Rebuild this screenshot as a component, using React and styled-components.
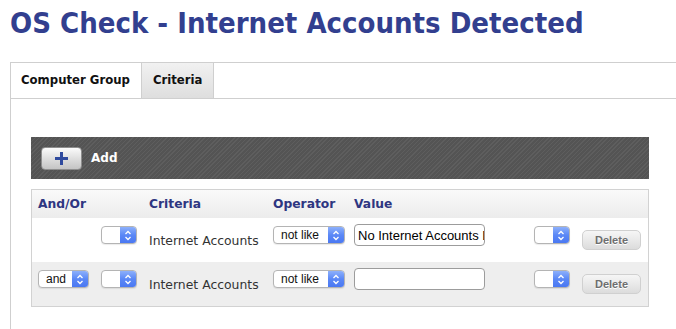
import React from "react";
import styled, { createGlobalStyle } from "styled-components";

const GlobalStyle = createGlobalStyle`
    body {
        margin: 0;
        background: #fff;
        font-family: "DejaVu Sans", sans-serif;
    }
`;

const Page = styled.div`
    width: 676px;
    height: 329px;
    overflow: hidden;
    padding-left: 10px;
    box-sizing: border-box;
`;

const Title = styled.h1`
    margin: 0;
    padding-top: 8px;
    font-family: "DejaVu Sans Condensed", "DejaVu Sans", sans-serif;
    font-stretch: condensed;
    font-size: 29px;
    line-height: 31px;
    font-weight: bold;
    color: #323f8f;
    white-space: nowrap;
`;

const TabPanel = styled.div`
    margin-top: 23px;
    width: 700px;
    height: 300px;
    border-top: 1px solid #cfcfcf;
    border-left: 1px solid #cfcfcf;
`;

const TabBar = styled.div`
    display: flex;
    height: 35px;
    border-bottom: 1px solid #cfcfcf;
`;

const Tab = styled.div`
    padding: 0 11px 0 10px;
    line-height: 35px;
    font-size: 11.7px;
    font-weight: bold;
    color: #111;
    border-right: 1px solid #cfcfcf;
    background: ${(p) => (p.$selected ? "linear-gradient(#f1f1f1, #dedede)" : "#fff")};

    &.second {
        padding-left: 11px;
    }
`;

const Content = styled.div`
    width: 618px;
    padding: 38px 0 0 20px;
`;

const Toolbar = styled.div`
    display: flex;
    align-items: center;
    height: 42px;
    padding-left: 10px;
    background-color: #595959;
    background-image: repeating-linear-gradient(
        135deg,
        #5e5e5e 0px,
        #5e5e5e 1px,
        #545454 1px,
        #545454 3px
    );
`;

const AddButton = styled.div`
    display: flex;
    align-items: center;
    justify-content: center;
    width: 41px;
    height: 23px;
    box-sizing: border-box;
    border: 1px solid #8e8e8e;
    border-radius: 4px;
    background: linear-gradient(#fbfbfb, #d9d9d9 60%, #c4c4c4);
`;

const AddLabel = styled.span`
    margin-left: 9px;
    color: #fff;
    font-size: 12px;
    font-weight: bold;
`;

const Table = styled.div`
    margin-top: 10px;
    border: 1px solid #d2d2d2;
`;

const Row = styled.div`
    display: grid;
    grid-template-columns: 63px 48px 124px 81px 180px 48px 1fr;
    align-items: start;
    height: ${(p) => (p.$header ? "28px" : "44px")};
    padding-left: 6px;
    background: ${(p) =>
        p.$header ? "linear-gradient(#fafafa, #ececec)" : p.$alt ? "#eeeeee" : "#fff"};
`;

const HeaderCell = styled.div`
    line-height: 28px;
    font-size: 12.3px;
    font-weight: bold;
    color: #2e3681;
`;

const CriteriaText = styled.div`
    margin-top: 15px;
    font-size: 12.4px;
    line-height: 16px;
    color: #333;
    white-space: nowrap;
`;

const SelectBox = styled.div`
    margin-top: 8px;
    display: flex;
    width: ${(p) => p.$width}px;
    height: 18px;
    box-sizing: border-box;
    border: 1px solid #b4b4b4;
    border-radius: 4px;
    background: #fff;
    box-shadow: 0 1px 1px rgba(0, 0, 0, 0.08);
    overflow: hidden;
`;

const SelectText = styled.span`
    flex: 1;
    padding-left: 7px;
    font-family: "Liberation Sans", Arial, sans-serif;
    font-size: 12px;
    line-height: 16px;
    color: #111;
`;

const SelectArrow = styled.span`
    display: flex;
    align-items: center;
    justify-content: center;
    width: 16px;
    background: linear-gradient(#8db0fb, #5b88f6 50%, #4a78f2);
`;

const ValueInput = styled.input`
    margin-top: 6px;
    width: 131px;
    height: 22px;
    box-sizing: border-box;
    padding: 0 0 0 3px;
    border: 1px solid #9c9c9c;
    border-radius: 4px;
    font-family: "Liberation Sans", Arial, sans-serif;
    font-size: 13px;
    color: #000;
    background: #fff;
    outline: none;
`;

const DeleteButton = styled.div`
    margin-top: 12px;
    width: 59px;
    height: 20px;
    box-sizing: border-box;
    border: 1px solid #d0d0d0;
    border-radius: 5px;
    background: linear-gradient(#f6f6f6, #dcdcdc);
    font-family: "Liberation Sans", Arial, sans-serif;
    font-size: 11px;
    font-weight: bold;
    line-height: 18px;
    text-align: center;
    color: #6e6e6e;
    text-shadow: 0 1px 0 #fff;
`;

const Chevrons = () => (
    <svg width="8" height="11" viewBox="0 0 8 11">
        <path d="M1.5 4 L4 1.5 L6.5 4" fill="none" stroke="#fff" strokeWidth="1.3" />
        <path d="M1.5 7 L4 9.5 L6.5 7" fill="none" stroke="#fff" strokeWidth="1.3" />
    </svg>
);

const Plus = () => (
    <svg width="13" height="13" viewBox="0 0 13 13">
        <rect x="5" y="0" width="3" height="13" fill="#2f4a9e" />
        <rect x="0" y="5" width="13" height="3" fill="#2f4a9e" />
    </svg>
);

const Select = ({ width, value }) => (
    <SelectBox $width={width}>
        <SelectText>{value}</SelectText>
        <SelectArrow>
            <Chevrons />
        </SelectArrow>
    </SelectBox>
);

const rows = [
    { andOr: null, value: "No Internet Accounts Detected" },
    { andOr: "and", value: "" },
];

const App = () => {
    return (
        <Page>
            <GlobalStyle />
            <Title>OS Check - Internet Accounts Detected</Title>
            <TabPanel>
                <TabBar>
                    <Tab>Computer Group</Tab>
                    <Tab className="second" $selected>Criteria</Tab>
                </TabBar>
                <Content>
                    <Toolbar>
                        <AddButton>
                            <Plus />
                        </AddButton>
                        <AddLabel>Add</AddLabel>
                    </Toolbar>
                    <Table>
                        <Row $header>
                            <HeaderCell>And/Or</HeaderCell>
                            <div />
                            <HeaderCell>Criteria</HeaderCell>
                            <HeaderCell>Operator</HeaderCell>
                            <HeaderCell>Value</HeaderCell>
                        </Row>
                        {rows.map((row, i) => (
                            <Row key={i} $alt={i % 2 === 1}>
                                <div>{row.andOr && <Select width={51} value={row.andOr} />}</div>
                                <Select width={36} value="" />
                                <CriteriaText>Internet Accounts</CriteriaText>
                                <Select width={72} value="not like" />
                                <ValueInput defaultValue={row.value} readOnly />
                                <Select width={36} value="" />
                                <DeleteButton>Delete</DeleteButton>
                            </Row>
                        ))}
                    </Table>
                </Content>
            </TabPanel>
        </Page>
    );
};

export default App;
